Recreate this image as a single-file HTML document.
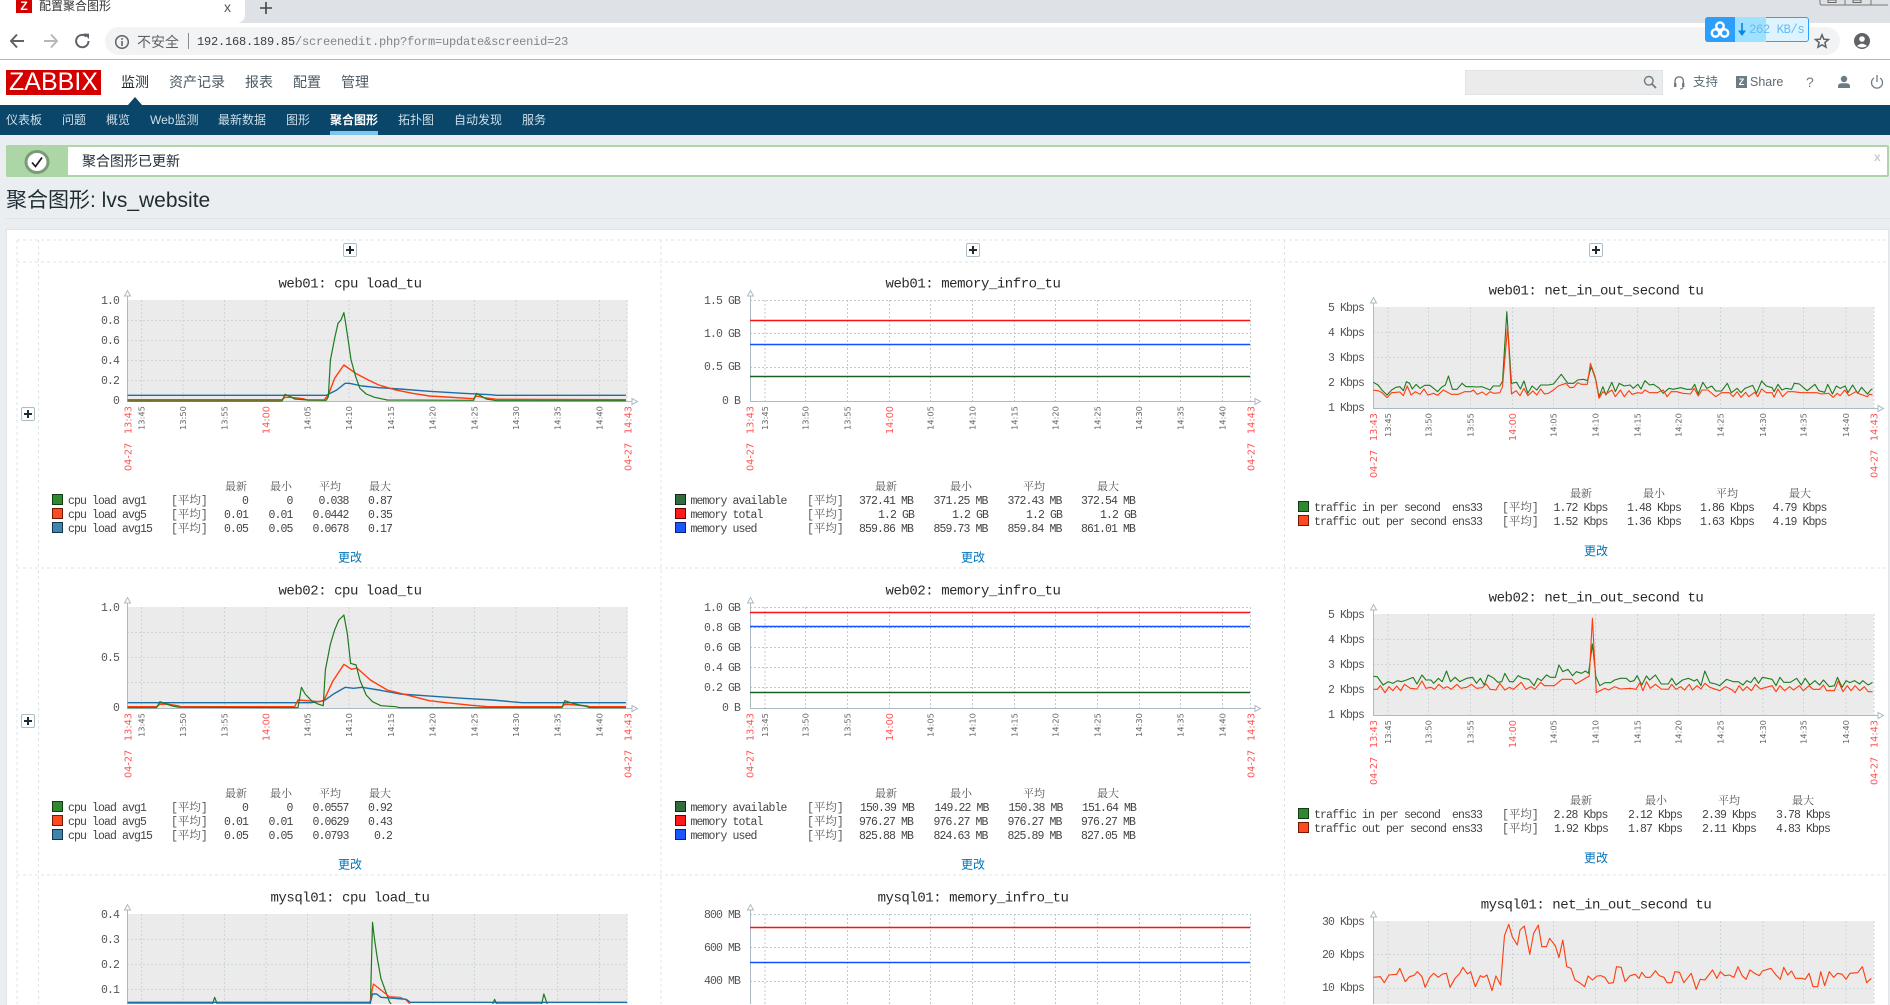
<!DOCTYPE html>
<html><head><meta charset="utf-8"><title>配置聚合图形</title>
<style>
html,body{margin:0;padding:0}
body{width:1890px;height:1004px;overflow:hidden;background:#ebeef0;position:relative;font-family:"Liberation Sans","Noto Sans CJK SC",sans-serif;color:#1f2c33}
.a{position:absolute;white-space:nowrap;line-height:20px}
.b{position:absolute}
.m{font-size:14px;color:#4a5a63;top:72px}
.s{font-size:12px;color:#cfdfe8;top:109.5px}
svg.g{position:absolute;left:0;top:0}
svg.g text{white-space:pre}
.t{font:14px "Liberation Mono",monospace;letter-spacing:-.45px;fill:#2a2a2a;text-anchor:middle}
.y{font:11.5px "Liberation Mono",monospace;letter-spacing:-.9px;fill:#555;text-anchor:end}
.l{font:11.5px "Liberation Mono",monospace;letter-spacing:-.9px;fill:#444}
.v{font:11.5px "Liberation Mono",monospace;letter-spacing:-.9px;fill:#444;text-anchor:end}
.c{font:11px "Liberation Serif","Noto Serif CJK SC",serif;fill:#555}
.k{font:11.5px "Liberation Mono","Noto Serif CJK SC",monospace;fill:#555}
.x{font:8.3px "DejaVu Sans",sans-serif;fill:#666}
.r{font:9.7px "DejaVu Sans",sans-serif;fill:#f55}
.u{font:12px "Liberation Sans","Noto Sans CJK SC",sans-serif;fill:#0275b8;text-anchor:middle}
.d{fill:none;stroke:#ccd5da;stroke-width:1;stroke-dasharray:2 2}
.dm{fill:none;stroke:#c4c8ca;stroke-width:1;stroke-dasharray:2 2}
.p{fill:none;vector-effect:non-scaling-stroke;stroke-linejoin:round}
.ax{fill:none;stroke:#acbbc2;stroke-width:1}
</style></head><body>

<!-- browser chrome -->
<div class="b" style="left:0;top:0;width:1890px;height:23px;background:#dee1e6"></div>
<div class="b" style="left:0;top:0;width:245px;height:23px;background:#fff;border-radius:0 0 8px 0"></div>
<div class="b" style="left:16px;top:0;width:16px;height:13px;background:#d40000;color:#fff;font-weight:bold;font-size:12px;line-height:13px;text-align:center">Z</div>
<div class="a" style="left:39px;top:-4px;font-size:12px;color:#333">配置聚合图形</div>
<div class="a" style="left:224px;top:-3px;font-size:14px;color:#555">x</div>
<svg class="b" style="left:259px;top:1px" width="14" height="14"><path d="M7 1V13M1 7H13" stroke="#444" stroke-width="1.6"/></svg>
<svg class="b" style="left:1818px;top:0" width="72" height="6"><path d="M2 0V3Q2 5 4 5H70" fill="none" stroke="#777"/><path d="M27 0V5M53 0V5" stroke="#777"/><rect x="10" y="0" width="8" height="2.5" fill="none" stroke="#666"/><rect x="35" y="0" width="8" height="2.5" fill="none" stroke="#666"/></svg>
<div class="b" style="left:0;top:23px;width:1890px;height:36px;background:#fff;border-bottom:1px solid #b5b5b5"></div>
<div class="b" style="left:105px;top:27px;width:1735px;height:28px;background:#f1f3f4;border-radius:14px"></div>
<svg class="b" style="left:8px;top:31px" width="90" height="20"><path d="M16 10H3M9 3.5L3 10L9 16.5" fill="none" stroke="#5f6368" stroke-width="2"/><path d="M36 10H49M43 3.5L49 10L43 16.5" fill="none" stroke="#b5b8bb" stroke-width="2"/><path d="M78.5 5.5A6.2 6.2 0 1 0 80.5 10" fill="none" stroke="#5f6368" stroke-width="2"/><path d="M75.5 2.5L81 2.8V8Z" fill="#5f6368"/></svg>
<svg class="b" style="left:114px;top:34px" width="16" height="16"><circle cx="8" cy="8" r="6.3" fill="none" stroke="#5f6368" stroke-width="1.5"/><path d="M8 7V12M8 4V5.7" stroke="#5f6368" stroke-width="1.6"/></svg>
<div class="a" style="left:137px;top:32px;font-size:14px;color:#5f6368">不安全</div>
<div class="b" style="left:188px;top:33px;width:1px;height:16px;background:#8a8d90"></div>
<div class="a" style="left:197px;top:32px;font:12px/20px 'Liberation Mono',monospace;letter-spacing:-.2px;color:#80868b"><span style="color:#3c4043">192.168.189.85</span>/screenedit.php?form=update&amp;screenid=23</div>
<!-- netdisk widget -->
<div class="b" style="left:1705px;top:17px;width:104px;height:25px;border-radius:3px;overflow:hidden;background:#dff3ff;outline:1px solid #2b9ffb;outline-offset:-1px">
<div class="b" style="left:0;top:0;width:30px;height:25px;background:#2b9ffb"></div>
<div class="b" style="left:30px;top:0;width:31px;height:25px;background:#9fe1ff"></div>
<svg class="b" style="left:5px;top:3px" width="20" height="19"><circle cx="10" cy="6.2" r="3.7" fill="none" stroke="#fff" stroke-width="2.4"/><circle cx="5.5" cy="13" r="3.7" fill="none" stroke="#fff" stroke-width="2.4"/><circle cx="14.5" cy="13" r="3.7" fill="none" stroke="#fff" stroke-width="2.4"/></svg>
<svg class="b" style="left:32px;top:5px" width="10" height="15"><path d="M5 1V12" stroke="#0b84e0" stroke-width="1.6"/><path d="M1 8.5L5 14L9 8.5Z" fill="#0b84e0"/></svg>
<div class="a" style="left:44px;top:3px;font:12.5px/20px 'Liberation Mono',monospace;letter-spacing:-.6px;color:#62bdf7">262 KB/s</div>
</div>
<svg class="b" style="left:1814px;top:33px" width="16" height="16"><path d="M8 1.8L9.8 6.2L14.5 6.5L10.9 9.5L12 14.2L8 11.7L4 14.2L5.1 9.5L1.5 6.5L6.2 6.2Z" fill="none" stroke="#5f6368" stroke-width="1.5"/></svg>
<svg class="b" style="left:1853px;top:32px" width="18" height="18"><circle cx="9" cy="9" r="8" fill="#5f6368"/><circle cx="9" cy="7" r="2.8" fill="#fff"/><path d="M4 14Q9 9.5 14 14Q9 17 4 14Z" fill="#fff"/></svg>

<!-- zabbix header -->
<div class="b" style="left:0;top:60px;width:1890px;height:45px;background:#fff"></div>
<div class="b" style="left:6px;top:70px;width:95px;height:25px;background:#d40000;color:#fff;font-size:25px;line-height:25px;text-align:center">ZABBIX</div>
<div class="a m" style="left:121px;color:#1f2c33">监测</div>
<div class="a m" style="left:169px">资产记录</div>
<div class="a m" style="left:245px">报表</div>
<div class="a m" style="left:293px">配置</div>
<div class="a m" style="left:341px">管理</div>
<div class="b" style="left:128px;top:97px;width:0;height:0;border-left:7px solid transparent;border-right:7px solid transparent;border-bottom:8px solid #0a466a"></div>
<div class="b" style="left:1465px;top:70px;width:196px;height:23px;background:#ebebeb;border:1px solid #dfe4e7"></div>
<svg class="b" style="left:1643px;top:75px" width="14" height="14"><circle cx="5.8" cy="5.8" r="4.3" fill="none" stroke="#6c7c85" stroke-width="1.4"/><path d="M9 9L13 13" stroke="#6c7c85" stroke-width="1.8"/></svg>
<svg class="b" style="left:1673px;top:75px" width="12" height="16"><path d="M2 9V6A4.2 4.2 0 0 1 10.4 6V9" fill="none" stroke="#6c7c85" stroke-width="1.4"/><rect x="1" y="8" width="2.4" height="4" fill="#6c7c85"/><rect x="9" y="8" width="2.4" height="4" fill="#6c7c85"/><path d="M10 12Q10 14 7 14" fill="none" stroke="#6c7c85"/></svg>
<div class="a" style="left:1693px;top:72px;font-size:12.5px;color:#5a6a73">支持</div>
<div class="b" style="left:1736px;top:76px;width:11px;height:12px;background:#6c7c85;color:#fff;font:bold 9px/12px 'Liberation Sans';text-align:center">Z</div>
<div class="a" style="left:1750px;top:72px;font-size:12.5px;color:#5a6a73">Share</div>
<div class="a" style="left:1806px;top:72px;font-size:14px;color:#6c7c85">?</div>
<svg class="b" style="left:1837px;top:75px" width="14" height="14"><circle cx="7" cy="4" r="3.2" fill="#6c7c85"/><path d="M1 13V11Q1 8.5 4.5 8.2H9.5Q13 8.5 13 11V13Z" fill="#6c7c85"/></svg>
<svg class="b" style="left:1870px;top:74px" width="14" height="16"><path d="M4 4A5.5 5.5 0 1 0 10 4" fill="none" stroke="#6c7c85" stroke-width="1.3"/><path d="M7 1V8" stroke="#6c7c85" stroke-width="1.3"/></svg>

<!-- sub nav -->
<div class="b" style="left:0;top:105px;width:1890px;height:30px;background:#0a466a"></div>
<div class="a s" style="left:6px">仪表板</div>
<div class="a s" style="left:62px">问题</div>
<div class="a s" style="left:106px">概览</div>
<div class="a s" style="left:150px">Web监测</div>
<div class="a s" style="left:218px">最新数据</div>
<div class="a s" style="left:286px">图形</div>
<div class="a s" style="left:330px;color:#fff;font-weight:bold">聚合图形</div>
<div class="b" style="left:330px;top:131px;width:48px;height:4px;background:#7dc4ee"></div>
<div class="a s" style="left:398px">拓扑图</div>
<div class="a s" style="left:454px">自动发现</div>
<div class="a s" style="left:522px">服务</div>

<!-- message -->
<div class="b" style="left:6px;top:145px;width:1879px;height:28px;background:#fff;border:2px solid #acd6a5;border-radius:2px"></div>
<div class="b" style="left:6px;top:145px;width:62px;height:32px;background:#acd6a5;border-radius:2px 0 0 2px"></div>
<svg class="b" style="left:24px;top:149px" width="26" height="26"><ellipse cx="13" cy="13" rx="11" ry="10.5" fill="#fff" stroke="#7c9a7a" stroke-width="3"/><path d="M8 13.5L11.5 17.5L18 8.5" fill="none" stroke="#111" stroke-width="1.6"/></svg>
<div class="a" style="left:82px;top:151px;font-size:14px;color:#1f2c33">聚合图形已更新</div>
<div class="a" style="left:1874px;top:147px;font-size:12px;font-weight:bold;color:#c5cdd2">x</div>

<!-- heading -->
<div class="a" style="left:6px;top:191px;font-size:21px;line-height:20px;color:#1f2c33">聚合图形: lvs_website</div>
<div class="b" style="left:6px;top:218px;width:1884px;height:1px;background:#dfe4e7"></div>
<div class="b" style="left:6px;top:229px;width:1881px;height:775px;background:#fff;border:1px solid #dfe4e7;border-bottom:0"></div>

<!-- plus buttons -->
<svg class="g" width="1890" height="1004" viewBox="0 0 1890 1004">
<defs>
<path id="vc" d="M141.5 300V401M183 300V401M224.5 300V401M266 300V401M307.5 300V401M349 300V401M391 300V401M432.5 300V401M474.5 300V401M516 300V401M557.5 300V401M599.5 300V401M627 300V401"/>
<path id="vm" d="M765 300V401M805.5 300V401M847.5 300V401M889.5 300V401M930.5 300V401M972.5 300V401M1014.5 300V401M1055.5 300V401M1097.5 300V401M1139.5 300V401M1180.5 300V401M1222.5 300V401M1250.5 300V401"/>
<path id="vn" d="M1388 300V401M1428.5 300V401M1470.5 300V401M1512.5 300V401M1553.5 300V401M1595.5 300V401M1637.5 300V401M1678.5 300V401M1720.5 300V401M1763 300V401M1803.5 300V401M1846 300V401M1874 300V401"/>
<path id="ac" d="M127.5 296V401.5H632M124.5 296H130.5L127.5 290.5ZM632 398.5V404.5L637.5 401.5Z"/>
<path id="am" d="M750.5 296V401.5H1255M747.5 296H753.5L750.5 290.5ZM1255 398.5V404.5L1260.5 401.5Z"/>
<path id="an" d="M1373.5 296V401.5H1878M1370.5 296H1376.5L1373.5 290.5ZM1878 398.5V404.5L1883.5 401.5Z"/>
<g id="pl"><rect x=".5" y=".5" width="13" height="13" rx="1.5" fill="#fff" stroke="#aebcc4"/><path d="M7 3V11M3 7H11" stroke="#1f2c33" stroke-width="2"/></g>
</defs>

<!-- page grid -->
<path d="M17 240H1888M17 262H1888M17 568H1888M17 875H1888M17 240V1004M38.5 240V1004M661 240V1004M1284.5 240V1004" fill="none" stroke="#dfe4e7" stroke-dasharray="3 3"/>
<use href="#pl" x="343" y="243"/><use href="#pl" x="966" y="243"/><use href="#pl" x="1589" y="243"/>
<use href="#pl" x="21" y="407"/><use href="#pl" x="21" y="714"/>

<!-- ROW 1 -->
<g>
<rect x="127.5" y="300" width="500" height="101" fill="#ebebeb"/>
<use href="#vc" class="d"/>
<path class="d" d="M127 320.5H627M127 340.5H627M127 360.5H627M127 380.5H627"/>
<use href="#ac" class="ax"/>
<text class="t" x="350" y="287.5">web01: cpu load_tu</text>
<text class="y" x="119" y="304">1.0</text><text class="y" x="119" y="324">0.8</text><text class="y" x="119" y="344">0.6</text><text class="y" x="119" y="364">0.4</text><text class="y" x="119" y="384">0.2</text><text class="y" x="119" y="404">0</text>

<use href="#vm" class="dm"/>
<path class="dm" d="M750 300.5H1250M750 333.5H1250M750 367.5H1250"/>
<use href="#am" class="ax"/>
<path d="M750 320.5H1250" stroke="#ff1010" stroke-width="1.5"/><path d="M750 344.5H1250" stroke="#1050ff" stroke-width="1.5"/><path d="M750 376.5H1250" stroke="#1a6020" stroke-width="1.5"/>
<text class="t" x="973" y="287.5">web01: memory_infro_tu</text>
<text class="y" x="740" y="304">1.5 GB</text><text class="y" x="740" y="337">1.0 GB</text><text class="y" x="740" y="370">0.5 GB</text><text class="y" x="740" y="404">0 B</text>

<g transform="translate(0,7)">
<rect x="1373.5" y="300" width="500" height="101" fill="#ebebeb"/>
<use href="#vn" class="d"/>
<path class="d" d="M1373 325.5H1873M1373 350.5H1873M1373 375.5H1873"/>
<use href="#an" class="ax"/>
<text class="t" x="1596" y="287.5">web01: net_in_out_second tu</text>
<text class="y" x="1364" y="304">5 Kbps</text><text class="y" x="1364" y="329">4 Kbps</text><text class="y" x="1364" y="354">3 Kbps</text><text class="y" x="1364" y="379">2 Kbps</text><text class="y" x="1364" y="404">1 Kbps</text>
</g>
</g>

<!-- ROW 2 -->
<g transform="translate(0,307)">
<rect x="127.5" y="300" width="500" height="101" fill="#ebebeb"/>
<use href="#vc" class="d"/>
<path class="d" d="M127 325.5H627M127 350.5H627M127 375.5H627"/>
<use href="#ac" class="ax"/>
<text class="t" x="350" y="287.5">web02: cpu load_tu</text>
<text class="y" x="119" y="304">1.0</text><text class="y" x="119" y="354">0.5</text><text class="y" x="119" y="404">0</text>

<use href="#vm" class="dm"/>
<path class="dm" d="M750 300.5H1250M750 320.5H1250M750 340.5H1250M750 360.5H1250M750 380.5H1250"/>
<use href="#am" class="ax"/>
<path d="M750 305.5H1250" stroke="#ff1010" stroke-width="1.5"/><path d="M750 319.5H1250" stroke="#1050ff" stroke-width="1.5"/><path d="M750 385.5H1250" stroke="#1a6020" stroke-width="1.5"/>
<text class="t" x="973" y="287.5">web02: memory_infro_tu</text>
<text class="y" x="740" y="304">1.0 GB</text><text class="y" x="740" y="324">0.8 GB</text><text class="y" x="740" y="344">0.6 GB</text><text class="y" x="740" y="364">0.4 GB</text><text class="y" x="740" y="384">0.2 GB</text><text class="y" x="740" y="404">0 B</text>

<g transform="translate(0,7)">
<rect x="1373.5" y="300" width="500" height="101" fill="#ebebeb"/>
<use href="#vn" class="d"/>
<path class="d" d="M1373 325.5H1873M1373 350.5H1873M1373 375.5H1873"/>
<use href="#an" class="ax"/>
<text class="t" x="1596" y="287.5">web02: net_in_out_second tu</text>
<text class="y" x="1364" y="304">5 Kbps</text><text class="y" x="1364" y="329">4 Kbps</text><text class="y" x="1364" y="354">3 Kbps</text><text class="y" x="1364" y="379">2 Kbps</text><text class="y" x="1364" y="404">1 Kbps</text>
</g>
</g>

<!-- ROW 3 -->
<g transform="translate(0,614)">
<rect x="127.5" y="300" width="500" height="101" fill="#ebebeb"/>
<use href="#vc" class="d"/>
<path class="d" d="M127 325.5H627M127 350.5H627M127 375.5H627"/>
<use href="#ac" class="ax"/>
<text class="t" x="350" y="287.5">mysql01: cpu load_tu</text>
<text class="y" x="119" y="304">0.4</text><text class="y" x="119" y="329">0.3</text><text class="y" x="119" y="354">0.2</text><text class="y" x="119" y="379">0.1</text>

<use href="#vm" class="dm"/>
<path class="dm" d="M750 300.5H1250M750 333.5H1250M750 367.5H1250"/>
<use href="#am" class="ax"/>
<path d="M750 313.5H1250" stroke="#ff1010" stroke-width="1.5"/><path d="M750 348.5H1250" stroke="#1050ff" stroke-width="1.5"/>
<text class="t" x="973" y="287.5">mysql01: memory_infro_tu</text>
<text class="y" x="740" y="304">800 MB</text><text class="y" x="740" y="337">600 MB</text><text class="y" x="740" y="370">400 MB</text>

<g transform="translate(0,7)">
<rect x="1373.5" y="300" width="500" height="101" fill="#ebebeb"/>
<use href="#vn" class="d"/>
<path class="d" d="M1373 333.5H1873M1373 367.5H1873"/>
<use href="#an" class="ax"/>
<text class="t" x="1596" y="287.5">mysql01: net_in_out_second tu</text>
<text class="y" x="1364" y="304">30 Kbps</text><text class="y" x="1364" y="337">20 Kbps</text><text class="y" x="1364" y="370">10 Kbps</text>
</g>
</g>

<!-- data lines, CPU -->
<g transform="translate(0,240) scale(.42092,.33333)">
<polyline class="p" stroke="#1c6fa5" stroke-width="1.4" points="303,466 680,466 775,466 800,450 820,430 830,430 860,438 900,443 950,447 1020,454 1100,460 1165,464 1180,466 1487,466"/>
<polyline class="p" stroke="#ff3d0d" stroke-width="1.4" points="303,479 670,479 677,472 690,472 720,476 730,480 770,480 780,465 795,415 817,375 845,400 875,420 900,435 940,450 980,460 1020,468 1060,471 1125,476 1132,468 1150,473 1180,478 1487,479"/>
<polyline class="p" stroke="#1f7a1f" stroke-width="1.2" points="303,483 670,483 677,463 690,470 700,477 730,480 775,481 780,470 785,360 795,295 803,250 810,240 817,218 820,240 826,290 834,360 845,410 855,445 870,462 890,472 920,480 1125,481 1132,460 1142,467 1155,477 1180,482 1487,482"/>
</g>
<g transform="translate(0,570) scale(.42092,.33333)">
<polyline class="p" stroke="#1c6fa5" stroke-width="1.4" points="303,398 740,398 770,392 795,370 820,352 840,355 860,352 900,360 950,372 1030,379 1100,385 1170,390 1240,398 1487,398"/>
<polyline class="p" stroke="#ff3d0d" stroke-width="1.4" points="303,410 372,410 380,403 395,402 425,408 430,410 700,410 708,390 760,395 770,390 790,335 817,283 835,298 848,294 880,330 920,360 970,376 1020,392 1060,398 1120,406 1160,410 1335,410 1342,403 1360,404 1395,408 1400,410 1487,410"/>
<polyline class="p" stroke="#1f7a1f" stroke-width="1.2" points="303,413 372,413 380,395 395,402 410,408 425,412 700,413 708,413 716,352 725,372 740,392 755,402 768,407 773,300 785,222 795,180 805,150 817,135 825,190 833,280 846,285 855,330 870,375 885,395 905,407 940,410 950,413 1335,413 1342,392 1360,400 1395,410 1400,413 1487,413"/>
<polyline class="p" stroke="#1f7a1f" stroke-width="1.2" points="303,1302 505,1302 510,1282 516,1302 880,1302 885,1057 890,1110 897,1170 905,1225 915,1260 925,1295 930,1304 1170,1304 1175,1288 1180,1302 1287,1302 1292,1272 1300,1302"/>
<polyline class="p" stroke="#ff3d0d" stroke-width="1.2" points="878,1304 887,1242 905,1260 925,1280 950,1282 965,1290 975,1304"/>
<polyline class="p" stroke="#1c6fa5" stroke-width="1.4" points="303,1297 880,1297 885,1272 895,1272 905,1282 965,1288 975,1297 1490,1297"/>
</g>

<!-- data lines, NET -->
<g transform="translate(1280,240) scale(.38903,.33333)">
<polyline class="p" stroke="#1f7a1f" stroke-width="1.1" points="240,427 252,435 262,450 275,465 287,450 298,442 308,440 317,452 325,425 333,430 340,447 350,433 360,445 372,436 385,436 395,445 405,455 415,442 425,435 433,408 443,448 455,448 468,430 478,440 495,440 505,441 518,440 530,445 540,450 548,438 565,438 572,424 583,215 595,430 608,427 618,447 627,423 637,460 648,438 660,450 670,435 690,435 703,432 723,403 740,430 755,430 765,420 780,418 790,422 800,380 812,420 820,470 830,440 838,465 853,427 862,455 872,430 885,438 900,435 908,445 920,433 928,447 938,422 950,435 960,433 975,445 985,460 1000,445 1010,448 1030,443 1045,448 1058,448 1066,433 1075,462 1087,427 1097,445 1110,438 1120,453 1135,453 1150,430 1160,458 1175,445 1185,458 1195,445 1215,436 1225,460 1238,423 1250,438 1265,443 1270,455 1280,433 1290,450 1300,445 1315,448 1322,430 1335,432 1355,452 1375,433 1385,452 1400,457 1408,433 1420,462 1430,438 1440,445 1453,438 1460,458 1472,435 1485,460 1495,442 1510,462 1520,448 1523,448"/>
<polyline class="p" stroke="#ff3d0d" stroke-width="1.1" points="240,451 252,452 262,458 275,473 287,458 308,456 317,467 327,438 337,465 348,455 360,463 370,447 380,465 395,460 405,466 420,450 440,463 458,463 475,455 490,455 497,450 507,463 520,456 530,465 540,455 550,460 565,458 572,440 585,260 595,462 607,452 617,467 627,445 637,467 650,453 660,465 670,447 680,462 690,460 703,450 715,438 735,430 745,443 755,442 765,428 775,433 790,433 798,370 810,410 820,475 830,455 838,462 853,450 862,470 875,450 885,470 897,452 905,463 920,458 930,460 938,450 950,458 970,458 985,450 995,470 1005,455 1020,455 1035,460 1055,462 1065,445 1075,468 1085,450 1100,450 1120,470 1135,458 1155,458 1165,470 1175,455 1185,472 1197,457 1205,470 1220,457 1228,470 1238,447 1250,458 1265,458 1270,472 1280,447 1292,470 1305,455 1320,455 1340,458 1360,458 1380,458 1392,462 1410,460 1422,472 1432,460 1440,467 1452,450 1462,467 1480,455 1490,462 1510,470 1515,463 1523,464"/>
</g>
<g transform="translate(1280,570) scale(.38903,.33333)">
<polyline class="p" stroke="#1f7a1f" stroke-width="1.1" points="240,319 250,320 265,345 278,335 290,340 302,332 312,335 325,330 342,322 352,342 365,315 375,330 388,330 395,340 407,325 417,335 428,303 438,335 450,322 462,335 480,325 495,322 505,340 515,325 525,345 535,315 550,325 560,337 570,335 578,310 590,335 600,335 612,317 625,325 640,328 653,347 662,325 672,332 685,315 695,322 708,322 717,285 727,305 740,298 752,317 762,305 775,310 785,303 793,310 803,222 812,320 822,347 835,338 850,338 860,330 875,325 890,325 900,335 910,332 918,317 930,345 942,318 950,330 965,315 980,342 998,342 1007,325 1018,345 1035,330 1050,325 1065,333 1072,328 1082,347 1092,303 1105,338 1120,342 1130,347 1148,328 1165,335 1178,335 1190,345 1200,332 1210,338 1220,322 1230,340 1240,322 1265,328 1275,347 1285,322 1295,337 1312,337 1328,325 1340,345 1350,325 1362,345 1375,332 1387,345 1397,330 1412,350 1425,347 1433,322 1445,352 1455,332 1465,338 1477,332 1490,342 1498,332 1512,345 1523,337"/>
<polyline class="p" stroke="#ff3d0d" stroke-width="1.1" points="240,358 250,358 258,347 270,368 280,350 290,362 300,348 310,362 320,343 335,355 352,357 365,333 375,355 388,352 398,358 408,343 420,355 430,350 440,358 455,343 465,355 480,352 492,343 505,355 520,353 530,342 540,358 555,360 565,340 578,360 590,352 600,358 620,337 632,358 645,350 655,358 670,337 680,347 705,347 725,328 750,328 760,342 795,318 803,145 813,368 835,355 845,360 860,350 875,357 900,355 915,358 925,338 933,362 942,335 952,355 965,343 980,357 998,358 1007,343 1018,358 1030,350 1040,360 1052,343 1060,360 1072,347 1082,357 1092,340 1105,352 1120,358 1130,362 1145,350 1160,358 1170,368 1180,347 1190,362 1200,350 1212,362 1222,343 1235,357 1250,352 1265,347 1275,365 1285,347 1297,362 1310,350 1320,360 1335,347 1345,362 1360,347 1370,358 1387,358 1397,345 1405,362 1425,362 1435,333 1447,365 1458,347 1468,362 1478,347 1490,362 1502,350 1512,365 1523,365"/>
<polyline class="p" stroke="#ff3d0d" stroke-width="1.1" points="240,1222 258,1220 268,1238 280,1215 300,1213 308,1195 322,1235 333,1220 345,1216 353,1205 365,1220 373,1252 385,1222 395,1210 407,1222 418,1212 428,1210 437,1252 450,1225 462,1210 470,1192 482,1212 490,1205 502,1250 515,1217 523,1222 532,1215 545,1262 555,1218 567,1245 577,1097 588,1063 597,1100 610,1125 617,1080 628,1068 642,1153 652,1090 664,1065 673,1130 685,1130 693,1105 708,1128 717,1163 727,1110 737,1190 748,1195 758,1230 770,1238 783,1250 792,1218 803,1230 815,1218 825,1217 835,1222 845,1240 857,1238 865,1190 877,1192 887,1235 900,1217 913,1213 923,1225 930,1207 940,1222 952,1222 965,1202 975,1217 987,1222 995,1238 1007,1238 1015,1205 1027,1207 1038,1238 1057,1210 1070,1258 1080,1228 1092,1230 1112,1200 1123,1225 1132,1205 1143,1217 1155,1215 1167,1222 1177,1190 1188,1217 1198,1228 1208,1200 1220,1210 1232,1217 1240,1203 1262,1195 1275,1215 1286,1228 1295,1192 1305,1215 1315,1203 1325,1225 1340,1225 1350,1228 1360,1210 1370,1250 1382,1250 1390,1205 1400,1247 1412,1205 1423,1222 1433,1210 1445,1213 1455,1228 1465,1210 1485,1208 1497,1190 1508,1238 1520,1225"/>
</g>

<!-- x labels + legends row 1 -->
<g>
<text class="r" transform="translate(131.5,434)rotate(-90)">13:43</text><text class="r" transform="translate(131.5,471)rotate(-90)">04-27</text>
<text class="x" transform="translate(144.5,430)rotate(-90)">13:45</text><text class="x" transform="translate(186,430)rotate(-90)">13:50</text><text class="x" transform="translate(227.5,430)rotate(-90)">13:55</text>
<text class="r" transform="translate(269.5,434)rotate(-90)">14:00</text>
<text class="x" transform="translate(310.5,430)rotate(-90)">14:05</text><text class="x" transform="translate(352,430)rotate(-90)">14:10</text><text class="x" transform="translate(394,430)rotate(-90)">14:15</text><text class="x" transform="translate(435.5,430)rotate(-90)">14:20</text><text class="x" transform="translate(477.5,430)rotate(-90)">14:25</text><text class="x" transform="translate(519,430)rotate(-90)">14:30</text><text class="x" transform="translate(560.5,430)rotate(-90)">14:35</text><text class="x" transform="translate(602.5,430)rotate(-90)">14:40</text>
<text class="r" transform="translate(631.5,434)rotate(-90)">14:43</text><text class="r" transform="translate(631.5,471)rotate(-90)">04-27</text>
<text class="c" x="225" y="490">最新</text><text class="c" x="270" y="490">最小</text><text class="c" x="319" y="490">平均</text><text class="c" x="369" y="490">最大</text>
<rect x="52.5" y="494.5" width="10" height="10" fill="#2f8a2f" stroke="#143c14"/><rect x="52.5" y="508.5" width="10" height="10" fill="#ff4a1f" stroke="#6e1a05"/><rect x="52.5" y="522.5" width="10" height="10" fill="#3f85ae" stroke="#14344a"/>
<text class="l" x="68" y="504">cpu load avg1</text><text class="l" x="68" y="518">cpu load avg5</text><text class="l" x="68" y="532">cpu load avg15</text>
<text class="k" x="171" y="504">[平均]</text><text class="k" x="171" y="518">[平均]</text><text class="k" x="171" y="532">[平均]</text>
<text class="v" x="248" y="504">0</text><text class="v" x="292.5" y="504">0</text><text class="v" x="348.5" y="504">0.038</text><text class="v" x="392" y="504">0.87</text>
<text class="v" x="248" y="518">0.01</text><text class="v" x="292.5" y="518">0.01</text><text class="v" x="348.5" y="518">0.0442</text><text class="v" x="392" y="518">0.35</text>
<text class="v" x="248" y="532">0.05</text><text class="v" x="292.5" y="532">0.05</text><text class="v" x="348.5" y="532">0.0678</text><text class="v" x="392" y="532">0.17</text>
<text class="u" x="350" y="561.5">更改</text>

<text class="r" transform="translate(753.5,434)rotate(-90)">13:43</text><text class="r" transform="translate(753.5,471)rotate(-90)">04-27</text>
<text class="x" transform="translate(768,430)rotate(-90)">13:45</text><text class="x" transform="translate(808.5,430)rotate(-90)">13:50</text><text class="x" transform="translate(850.5,430)rotate(-90)">13:55</text>
<text class="r" transform="translate(893,434)rotate(-90)">14:00</text>
<text class="x" transform="translate(933.5,430)rotate(-90)">14:05</text><text class="x" transform="translate(975.5,430)rotate(-90)">14:10</text><text class="x" transform="translate(1017.5,430)rotate(-90)">14:15</text><text class="x" transform="translate(1058.5,430)rotate(-90)">14:20</text><text class="x" transform="translate(1100.5,430)rotate(-90)">14:25</text><text class="x" transform="translate(1142,430)rotate(-90)">14:30</text><text class="x" transform="translate(1183.5,430)rotate(-90)">14:35</text><text class="x" transform="translate(1225.5,430)rotate(-90)">14:40</text>
<text class="r" transform="translate(1254.5,434)rotate(-90)">14:43</text><text class="r" transform="translate(1254.5,471)rotate(-90)">04-27</text>
<text class="c" x="875" y="490">最新</text><text class="c" x="950" y="490">最小</text><text class="c" x="1023" y="490">平均</text><text class="c" x="1097" y="490">最大</text>
<rect x="675.5" y="494.5" width="10" height="10" fill="#2f6e3c" stroke="#102a15"/><rect x="675.5" y="508.5" width="10" height="10" fill="#ff1a1a" stroke="#600"/><rect x="675.5" y="522.5" width="10" height="10" fill="#1a56ff" stroke="#0a2470"/>
<text class="l" x="690.5" y="504">memory available</text><text class="l" x="690.5" y="518">memory total</text><text class="l" x="690.5" y="532">memory used</text>
<text class="k" x="807" y="504">[平均]</text><text class="k" x="807" y="518">[平均]</text><text class="k" x="807" y="532">[平均]</text>
<text class="v" x="913" y="504">372.41 MB</text><text class="v" x="987.5" y="504">371.25 MB</text><text class="v" x="1061.5" y="504">372.43 MB</text><text class="v" x="1135" y="504">372.54 MB</text>
<text class="v" x="914" y="518">1.2 GB</text><text class="v" x="988" y="518">1.2 GB</text><text class="v" x="1062" y="518">1.2 GB</text><text class="v" x="1136" y="518">1.2 GB</text>
<text class="v" x="913" y="532">859.86 MB</text><text class="v" x="987.5" y="532">859.73 MB</text><text class="v" x="1061.5" y="532">859.84 MB</text><text class="v" x="1135" y="532">861.01 MB</text>
<text class="u" x="973" y="561.5">更改</text>

<g transform="translate(0,7)">
<text class="r" transform="translate(1377,434)rotate(-90)">13:43</text><text class="r" transform="translate(1377,471)rotate(-90)">04-27</text>
<text class="x" transform="translate(1391,430)rotate(-90)">13:45</text><text class="x" transform="translate(1431.5,430)rotate(-90)">13:50</text><text class="x" transform="translate(1473.5,430)rotate(-90)">13:55</text>
<text class="r" transform="translate(1516,434)rotate(-90)">14:00</text>
<text class="x" transform="translate(1556.5,430)rotate(-90)">14:05</text><text class="x" transform="translate(1598.5,430)rotate(-90)">14:10</text><text class="x" transform="translate(1640.5,430)rotate(-90)">14:15</text><text class="x" transform="translate(1681.5,430)rotate(-90)">14:20</text><text class="x" transform="translate(1723.5,430)rotate(-90)">14:25</text><text class="x" transform="translate(1766,430)rotate(-90)">14:30</text><text class="x" transform="translate(1806.5,430)rotate(-90)">14:35</text><text class="x" transform="translate(1849,430)rotate(-90)">14:40</text>
<text class="r" transform="translate(1877.5,434)rotate(-90)">14:43</text><text class="r" transform="translate(1877.5,471)rotate(-90)">04-27</text>
<text class="c" x="1570" y="490">最新</text><text class="c" x="1643" y="490">最小</text><text class="c" x="1716" y="490">平均</text><text class="c" x="1789" y="490">最大</text>
<rect x="1298.5" y="494.5" width="10" height="10" fill="#2f8a2f" stroke="#143c14"/><rect x="1298.5" y="508.5" width="10" height="10" fill="#ff4a1f" stroke="#6e1a05"/>
<text class="l" x="1314" y="504">traffic in per second  ens33</text><text class="l" x="1314" y="518">traffic out per second ens33</text>
<text class="k" x="1502" y="504">[平均]</text><text class="k" x="1502" y="518">[平均]</text>
<text class="v" x="1607.5" y="504">1.72 Kbps</text><text class="v" x="1681" y="504">1.48 Kbps</text><text class="v" x="1754" y="504">1.86 Kbps</text><text class="v" x="1826.5" y="504">4.79 Kbps</text>
<text class="v" x="1607.5" y="518">1.52 Kbps</text><text class="v" x="1681" y="518">1.36 Kbps</text><text class="v" x="1754" y="518">1.63 Kbps</text><text class="v" x="1826.5" y="518">4.19 Kbps</text>
<text class="u" x="1596" y="548">更改</text>
</g>
</g>

<!-- x labels + legends row 2 -->
<g transform="translate(0,307)">
<text class="r" transform="translate(131.5,434)rotate(-90)">13:43</text><text class="r" transform="translate(131.5,471)rotate(-90)">04-27</text>
<text class="x" transform="translate(144.5,430)rotate(-90)">13:45</text><text class="x" transform="translate(186,430)rotate(-90)">13:50</text><text class="x" transform="translate(227.5,430)rotate(-90)">13:55</text>
<text class="r" transform="translate(269.5,434)rotate(-90)">14:00</text>
<text class="x" transform="translate(310.5,430)rotate(-90)">14:05</text><text class="x" transform="translate(352,430)rotate(-90)">14:10</text><text class="x" transform="translate(394,430)rotate(-90)">14:15</text><text class="x" transform="translate(435.5,430)rotate(-90)">14:20</text><text class="x" transform="translate(477.5,430)rotate(-90)">14:25</text><text class="x" transform="translate(519,430)rotate(-90)">14:30</text><text class="x" transform="translate(560.5,430)rotate(-90)">14:35</text><text class="x" transform="translate(602.5,430)rotate(-90)">14:40</text>
<text class="r" transform="translate(631.5,434)rotate(-90)">14:43</text><text class="r" transform="translate(631.5,471)rotate(-90)">04-27</text>
<text class="c" x="225" y="490">最新</text><text class="c" x="270" y="490">最小</text><text class="c" x="319" y="490">平均</text><text class="c" x="369" y="490">最大</text>
<rect x="52.5" y="494.5" width="10" height="10" fill="#2f8a2f" stroke="#143c14"/><rect x="52.5" y="508.5" width="10" height="10" fill="#ff4a1f" stroke="#6e1a05"/><rect x="52.5" y="522.5" width="10" height="10" fill="#3f85ae" stroke="#14344a"/>
<text class="l" x="68" y="504">cpu load avg1</text><text class="l" x="68" y="518">cpu load avg5</text><text class="l" x="68" y="532">cpu load avg15</text>
<text class="k" x="171" y="504">[平均]</text><text class="k" x="171" y="518">[平均]</text><text class="k" x="171" y="532">[平均]</text>
<text class="v" x="248" y="504">0</text><text class="v" x="292.5" y="504">0</text><text class="v" x="348.5" y="504">0.0557</text><text class="v" x="392" y="504">0.92</text>
<text class="v" x="248" y="518">0.01</text><text class="v" x="292.5" y="518">0.01</text><text class="v" x="348.5" y="518">0.0629</text><text class="v" x="392" y="518">0.43</text>
<text class="v" x="248" y="532">0.05</text><text class="v" x="292.5" y="532">0.05</text><text class="v" x="348.5" y="532">0.0793</text><text class="v" x="392" y="532">0.2</text>
<text class="u" x="350" y="561.5">更改</text>

<text class="r" transform="translate(753.5,434)rotate(-90)">13:43</text><text class="r" transform="translate(753.5,471)rotate(-90)">04-27</text>
<text class="x" transform="translate(768,430)rotate(-90)">13:45</text><text class="x" transform="translate(808.5,430)rotate(-90)">13:50</text><text class="x" transform="translate(850.5,430)rotate(-90)">13:55</text>
<text class="r" transform="translate(893,434)rotate(-90)">14:00</text>
<text class="x" transform="translate(933.5,430)rotate(-90)">14:05</text><text class="x" transform="translate(975.5,430)rotate(-90)">14:10</text><text class="x" transform="translate(1017.5,430)rotate(-90)">14:15</text><text class="x" transform="translate(1058.5,430)rotate(-90)">14:20</text><text class="x" transform="translate(1100.5,430)rotate(-90)">14:25</text><text class="x" transform="translate(1142,430)rotate(-90)">14:30</text><text class="x" transform="translate(1183.5,430)rotate(-90)">14:35</text><text class="x" transform="translate(1225.5,430)rotate(-90)">14:40</text>
<text class="r" transform="translate(1254.5,434)rotate(-90)">14:43</text><text class="r" transform="translate(1254.5,471)rotate(-90)">04-27</text>
<text class="c" x="875" y="490">最新</text><text class="c" x="950" y="490">最小</text><text class="c" x="1023" y="490">平均</text><text class="c" x="1097" y="490">最大</text>
<rect x="675.5" y="494.5" width="10" height="10" fill="#2f6e3c" stroke="#102a15"/><rect x="675.5" y="508.5" width="10" height="10" fill="#ff1a1a" stroke="#600"/><rect x="675.5" y="522.5" width="10" height="10" fill="#1a56ff" stroke="#0a2470"/>
<text class="l" x="690.5" y="504">memory available</text><text class="l" x="690.5" y="518">memory total</text><text class="l" x="690.5" y="532">memory used</text>
<text class="k" x="807" y="504">[平均]</text><text class="k" x="807" y="518">[平均]</text><text class="k" x="807" y="532">[平均]</text>
<text class="v" x="914" y="504">150.39 MB</text><text class="v" x="988.5" y="504">149.22 MB</text><text class="v" x="1062.5" y="504">150.38 MB</text><text class="v" x="1136" y="504">151.64 MB</text>
<text class="v" x="913" y="518">976.27 MB</text><text class="v" x="987.5" y="518">976.27 MB</text><text class="v" x="1061.5" y="518">976.27 MB</text><text class="v" x="1135" y="518">976.27 MB</text>
<text class="v" x="913" y="532">825.88 MB</text><text class="v" x="987.5" y="532">824.63 MB</text><text class="v" x="1061.5" y="532">825.89 MB</text><text class="v" x="1135" y="532">827.05 MB</text>
<text class="u" x="973" y="561.5">更改</text>

<g transform="translate(0,7)">
<text class="r" transform="translate(1377,434)rotate(-90)">13:43</text><text class="r" transform="translate(1377,471)rotate(-90)">04-27</text>
<text class="x" transform="translate(1391,430)rotate(-90)">13:45</text><text class="x" transform="translate(1431.5,430)rotate(-90)">13:50</text><text class="x" transform="translate(1473.5,430)rotate(-90)">13:55</text>
<text class="r" transform="translate(1516,434)rotate(-90)">14:00</text>
<text class="x" transform="translate(1556.5,430)rotate(-90)">14:05</text><text class="x" transform="translate(1598.5,430)rotate(-90)">14:10</text><text class="x" transform="translate(1640.5,430)rotate(-90)">14:15</text><text class="x" transform="translate(1681.5,430)rotate(-90)">14:20</text><text class="x" transform="translate(1723.5,430)rotate(-90)">14:25</text><text class="x" transform="translate(1766,430)rotate(-90)">14:30</text><text class="x" transform="translate(1806.5,430)rotate(-90)">14:35</text><text class="x" transform="translate(1849,430)rotate(-90)">14:40</text>
<text class="r" transform="translate(1877.5,434)rotate(-90)">14:43</text><text class="r" transform="translate(1877.5,471)rotate(-90)">04-27</text>
<text class="c" x="1570" y="490">最新</text><text class="c" x="1645" y="490">最小</text><text class="c" x="1718" y="490">平均</text><text class="c" x="1792" y="490">最大</text>
<rect x="1298.5" y="494.5" width="10" height="10" fill="#2f8a2f" stroke="#143c14"/><rect x="1298.5" y="508.5" width="10" height="10" fill="#ff4a1f" stroke="#6e1a05"/>
<text class="l" x="1314" y="504">traffic in per second  ens33</text><text class="l" x="1314" y="518">traffic out per second ens33</text>
<text class="k" x="1502" y="504">[平均]</text><text class="k" x="1502" y="518">[平均]</text>
<text class="v" x="1607.5" y="504">2.28 Kbps</text><text class="v" x="1682" y="504">2.12 Kbps</text><text class="v" x="1756" y="504">2.39 Kbps</text><text class="v" x="1830" y="504">3.78 Kbps</text>
<text class="v" x="1608" y="518">1.92 Kbps</text><text class="v" x="1682" y="518">1.87 Kbps</text><text class="v" x="1756" y="518">2.11 Kbps</text><text class="v" x="1830" y="518">4.83 Kbps</text>
<text class="u" x="1596" y="548">更改</text>
</g>
</g>
</svg>
</body></html>
